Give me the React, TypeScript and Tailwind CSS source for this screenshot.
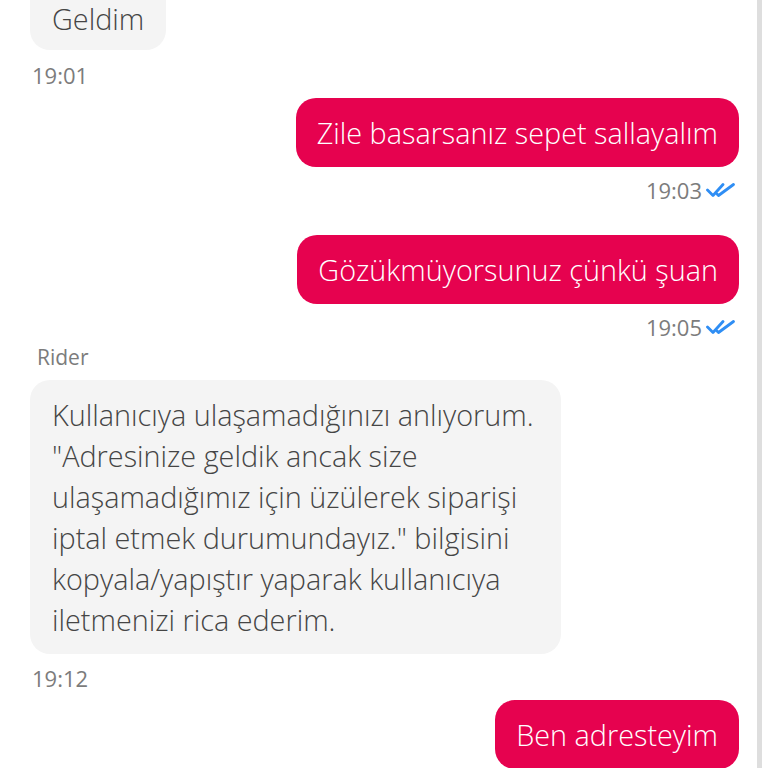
import React from 'react';

/**
 * Double tick shown under sent messages
 */
function ReadTicks() {
  return (
    <svg width="29" height="16" viewBox="0 0 29 16" fill="none" className="ml-[4px]">
      <path d="M1.5 8 L7 13.5 L17 2.5" stroke="#2f8ef4" strokeWidth="2.8" strokeLinecap="round" strokeLinejoin="round" />
      <path d="M11 12 L12.5 13.5 L27.5 2.5" stroke="#2f8ef4" strokeWidth="2.8" strokeLinecap="round" strokeLinejoin="round" />
    </svg>
  );
}

function Incoming({ children, className = '' }: { children: React.ReactNode; className?: string }) {
  return (
    <div className={`self-start rounded-[20px] bg-[#f4f4f4] px-[22px] text-[28.8px] font-light text-[#454545] ${className}`}>
      {children}
    </div>
  );
}

function Outgoing({ children, className = '' }: { children: React.ReactNode; className?: string }) {
  return (
    <div className={`self-end whitespace-nowrap rounded-[20px] bg-[#e6024f] px-[21px] py-[14px] text-[28.8px] font-light leading-[41px] text-white ${className}`}>
      {children}
    </div>
  );
}

function TimeLeft({ time, className = '' }: { time: string; className?: string }) {
  return <div className={`pl-[2px] text-[22px] leading-[24px] text-[#7c7c7c] ${className}`}>{time}</div>;
}

function TimeRight({ time, className = '' }: { time: string; className?: string }) {
  return (
    <div className={`flex items-center self-end pr-[4px] text-[22px] leading-[24px] text-[#7c7c7c] ${className}`}>
      <span>{time}</span>
      <ReadTicks />
    </div>
  );
}

export default function App() {
  return (
    <div
      className="flex h-[768px] w-[768px] overflow-hidden bg-white"
      style={{ fontFamily: '"Open Sans", "Noto Sans", sans-serif' }}
    >
      <div className="flex w-[757px] flex-col pl-[30px] pr-[18px]">
        <Incoming className="rounded-t-none pb-[12px] leading-[38px]">Geldim</Incoming>
        <TimeLeft time="19:01" className="mt-[13px]" />

        <Outgoing className="mt-[11px]">Zile basarsanız sepet sallayalım</Outgoing>
        <TimeRight time="19:03" className="mt-[11px]" />

        <Outgoing className="mt-[33px]">Gözükmüyorsunuz çünkü şuan</Outgoing>
        <TimeRight time="19:05" className="mt-[11px]" />

        <div className="mt-[6px] pl-[7px] text-[21px] leading-[24px] text-[#7c7c7c]">Rider</div>
        <Incoming className="mt-[11px] w-[531px] whitespace-nowrap py-[14px] leading-[41px]">
          Kullanıcıya ulaşamadığınızı anlıyorum.
          <br />
          "Adresinize geldik ancak size
          <br />
          ulaşamadığımız için üzülerek siparişi
          <br />
          iptal etmek durumundayız." bilgisini
          <br />
          kopyala/yapıştır yaparak kullanıcıya
          <br />
          iletmenizi rica ederim.
        </Incoming>
        <TimeLeft time="19:12" className="mt-[12px]" />

        <Outgoing className="mt-[10px]">Ben adresteyim</Outgoing>
      </div>
      <div className="h-full w-[5px] bg-[#dedede]" />
      <div className="flex-1 bg-white" />
    </div>
  );
}
